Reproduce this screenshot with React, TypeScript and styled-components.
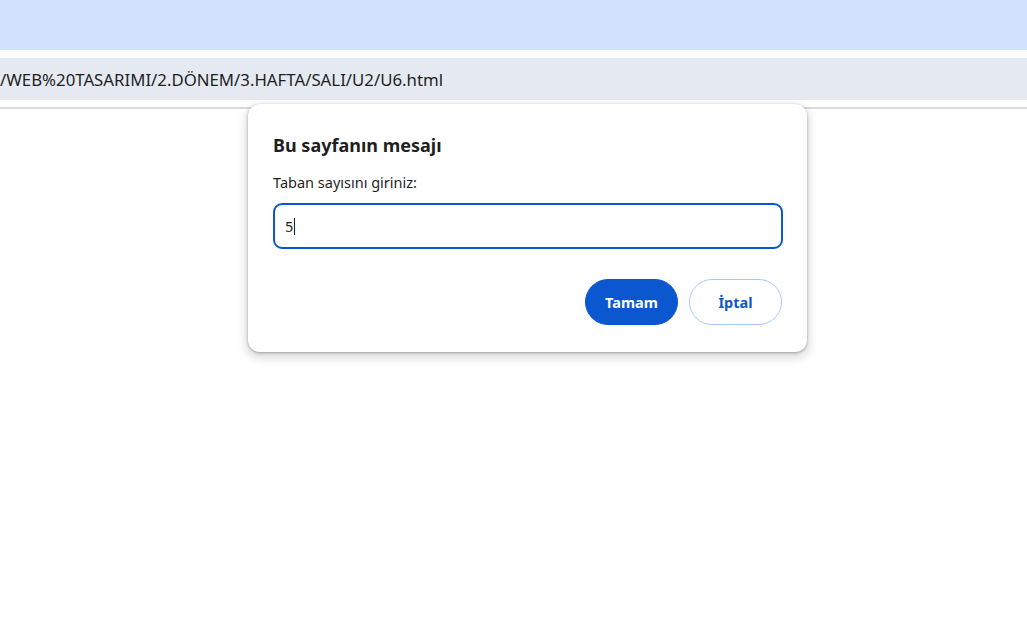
import * as React from 'react'
import styled, { createGlobalStyle } from 'styled-components'

const GlobalStyle = createGlobalStyle`
    html, body {
        margin: 0;
        padding: 0;
        background: #ffffff;
        font-family: "Noto Sans", "Open Sans", sans-serif;
    }
`

const Page = styled.div`
    position: relative;
    width: 1027px;
    height: 622px;
    overflow: hidden;
    background: #ffffff;
`

const TabStrip = styled.div`
    height: 50px;
    background: #d3e3fd;
`

const Toolbar = styled.div`
    padding: 8px 0 7px;
    background: #ffffff;
`

const Omnibox = styled.div`
    height: 42px;
    display: flex;
    align-items: center;
    background: #e5eaf2;
    color: #1f1f1f;
    font-size: 16.8px;
    white-space: nowrap;
`

const Divider = styled.div`
    height: 2px;
    background: #dadce0;
`

const Dialog = styled.div`
    position: absolute;
    left: 248px;
    top: 104px;
    width: 559px;
    height: 248px;
    box-sizing: border-box;
    padding: 29px 24px 0 25px;
    background: #ffffff;
    border-radius: 12px;
    box-shadow: 0 1px 3px rgba(0, 0, 0, 0.3), 0 4px 8px 3px rgba(0, 0, 0, 0.12);
    color: #1f1f1f;
`

const Title = styled.h2`
    margin: 0;
    font-size: 18px;
    font-weight: 700;
    line-height: 24px;
`

const Message = styled.p`
    margin: 15px 0 0;
    font-size: 14.5px;
    line-height: 20px;
`

const Field = styled.div`
    margin-top: 11px;
    height: 46px;
    box-sizing: border-box;
    border: 2px solid #0b57d0;
    border-radius: 9px;
    display: flex;
    align-items: center;
    padding-left: 10px;
    font-size: 14.5px;
`

const Caret = styled.span`
    display: inline-block;
    width: 1px;
    height: 17px;
    background: #1f1f1f;
    margin-left: 1px;
`

const Actions = styled.div`
    margin-top: 30px;
    display: flex;
    justify-content: flex-end;
    gap: 11px;
    padding-right: 1px;
`

const Button = styled.button<{ $primary?: boolean }>`
    width: 93px;
    height: 46px;
    box-sizing: border-box;
    border-radius: 23px;
    font-family: inherit;
    font-size: 14.5px;
    font-weight: 700;
    border: 1px solid ${p => (p.$primary ? '#0b57d0' : '#a8c7fa')};
    background: ${p => (p.$primary ? '#0b57d0' : '#ffffff')};
    color: ${p => (p.$primary ? '#ffffff' : '#0b57d0')};
    cursor: pointer;
`

export default function App() {
    return (
        <Page>
            <GlobalStyle />
            <TabStrip />
            <Toolbar>
                <Omnibox>/WEB%20TASARIMI/2.DÖNEM/3.HAFTA/SALI/U2/U6.html</Omnibox>
            </Toolbar>
            <Divider />
            <Dialog>
                <Title>Bu sayfanın mesajı</Title>
                <Message>Taban sayısını giriniz:</Message>
                <Field>
                    5<Caret />
                </Field>
                <Actions>
                    <Button $primary>Tamam</Button>
                    <Button>İptal</Button>
                </Actions>
            </Dialog>
        </Page>
    )
}
